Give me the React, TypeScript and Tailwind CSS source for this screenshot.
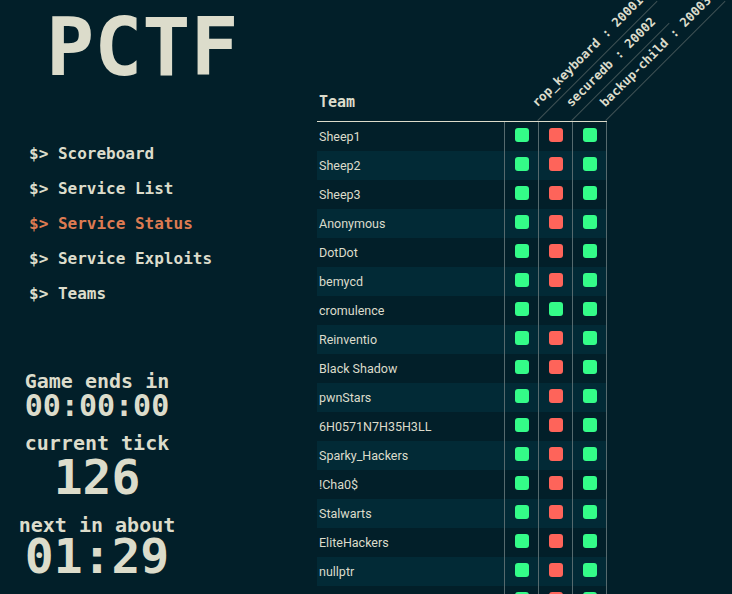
import React from 'react';

const mono = { fontFamily: '"DejaVu Sans Mono", "Liberation Mono", monospace' };
const sans = { fontFamily: 'Roboto, "Noto Sans", sans-serif' };

const services = [
  { name: 'rop_keyboard', port: 20001, left: 221 },
  { name: 'securedb', port: 20002, left: 255 },
  { name: 'backup-child', port: 20003, left: 289 },
];

const teams: { name: string; status: boolean[] }[] = [
  { name: 'Sheep1', status: [true, false, true] },
  { name: 'Sheep2', status: [true, false, true] },
  { name: 'Sheep3', status: [true, false, true] },
  { name: 'Anonymous', status: [true, false, true] },
  { name: 'DotDot', status: [true, false, true] },
  { name: 'bemycd', status: [true, false, true] },
  { name: 'cromulence', status: [true, true, true] },
  { name: 'Reinventio', status: [true, false, true] },
  { name: 'Black Shadow', status: [true, false, true] },
  { name: 'pwnStars', status: [true, false, true] },
  { name: '6H0571N7H35H3LL', status: [true, false, true] },
  { name: 'Sparky_Hackers', status: [true, false, true] },
  { name: '!Cha0$', status: [true, false, true] },
  { name: 'Stalwarts', status: [true, false, true] },
  { name: 'EliteHackers', status: [true, false, true] },
  { name: 'nullptr', status: [true, false, true] },
  { name: 'PPP', status: [true, false, true] },
  { name: 'Tokyo Westerns', status: [true, false, true] },
];

const nav = ['Scoreboard', 'Service List', 'Service Status', 'Service Exploits', 'Teams'];

function Sidebar() {
  return (
    <div className="w-[317px] shrink-0 font-bold text-[#dcdccb]" style={mono}>
      <div className="pl-[46px] mt-[8px] text-[80px] leading-[80px]">PCTF</div>
      <div className="mt-[48px] pl-[29px]">
        {nav.map((item) => (
          <div
            key={item}
            className={`text-[16px] leading-[35px] whitespace-pre ${
              item === 'Service Status' ? 'text-[#dd7b52]' : 'text-[#dcdccb]'
            }`}
          >
            {'$> ' + item}
          </div>
        ))}
      </div>
      <div className="mt-[59px] w-[194px] text-center">
        <div className="text-[20px] leading-[22px]">Game ends in</div>
        <div className="text-[30px] leading-[28px]">00:00:00</div>
        <div className="mt-[12px] text-[20px] leading-[22px]">current tick</div>
        <div className="text-[48px] leading-[46px]">126</div>
        <div className="mt-[14px] text-[20px] leading-[22px]">next in about</div>
        <div className="text-[48px] leading-[40px]">01:29</div>
      </div>
    </div>
  );
}

function StatusTable() {
  return (
    <div className="w-[290px]">
      <div className="relative h-[122px] border-b border-[#dcdccb] flex items-end">
        <div
          className="pl-[2px] pb-[10px] text-[15px] leading-[18px] font-bold text-[#dcdccb]"
          style={mono}
        >
          Team
        </div>
        {services.map((s) => (
          <div
            key={s.name}
            className="absolute bottom-0 origin-bottom-left -rotate-45 whitespace-pre border-b border-[#3e5154] px-[9px] pb-[6px] text-[12.5px] leading-[15px] font-bold text-[#dcdccb]"
            style={{ ...mono, left: s.left }}
          >
            {s.name + ' : ' + s.port}
          </div>
        ))}
      </div>
      {teams.map((t, i) => (
        <div
          key={t.name}
          className={`grid grid-cols-[187px_34px_34px_35px] h-[29px] ${
            i % 2 === 1 ? 'bg-[#022a36]' : ''
          }`}
        >
          <div className="pl-[2px] text-[12.5px] leading-[29px] text-[#dcdccb]" style={sans}>
            {t.name}
          </div>
          {t.status.map((ok, j) => (
            <div
              key={j}
              className={`flex justify-center items-start pt-[6px] border-l border-[#566a6e] ${
                j === 2 ? 'border-r' : ''
              }`}
            >
              <div
                className={`w-[14px] h-[14px] rounded-[3px] ${
                  ok ? 'bg-[#34fc88]' : 'bg-[#fe645a]'
                }`}
              />
            </div>
          ))}
        </div>
      ))}
    </div>
  );
}

export default function App() {
  return (
    <div className="w-full h-[594px] overflow-hidden bg-[#021f29] flex">
      <Sidebar />
      <StatusTable />
    </div>
  );
}
